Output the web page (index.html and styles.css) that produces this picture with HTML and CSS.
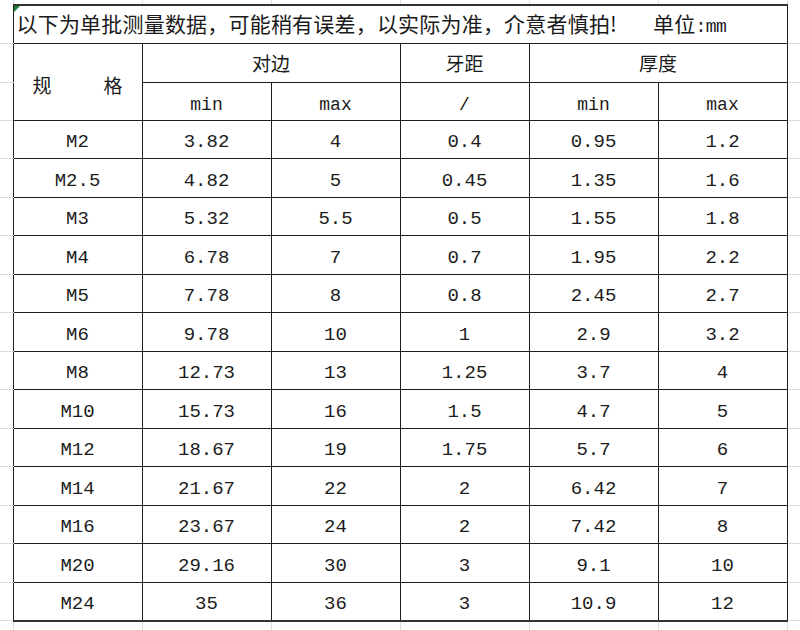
FILE: index.html
```html
<!DOCTYPE html>
<html lang="zh">
<head>
<meta charset="utf-8">
<title>规格表</title>
<link rel="stylesheet" href="styles.css">
</head>
<body>
<table class="sheet">
  <colgroup>
    <col class="c-gutter"><col class="c-col"><col class="c-col"><col class="c-col"><col class="c-col"><col class="c-col"><col class="c-col"><col class="c-gutter">
  </colgroup>
  <tr class="r-top">
    <td class="g g-top"></td><td class="g g-top"></td><td class="g g-top"></td><td class="g g-top"></td><td class="g g-top"></td><td class="g g-top"></td><td class="g g-top"></td><td class="g"></td>
  </tr>
  <tr class="r-title">
    <td class="g g-side"></td>
    <td class="title" colspan="6"><span class="mark"></span>以下为单批测量数据，可能稍有误差，以实际为准，介意者慎拍!<span class="unit">单位<span class="mono">:mm</span></span></td>
    <td class="g g-side"></td>
  </tr>
  <tr class="r-head">
    <td class="g g-side"></td>
    <th class="spec" rowspan="2"><span>规</span><span>格</span></th>
    <th colspan="2">对边</th>
    <th>牙距</th>
    <th colspan="2">厚度</th>
    <td class="g g-side"></td>
  </tr>
  <tr class="r-sub">
    <td class="g g-side"></td>
    <th class="mono">min</th><th class="mono">max</th><th class="mono">/</th><th class="mono">min</th><th class="mono">max</th>
    <td class="g g-side"></td>
  </tr>
  <tr class="r-data"><td class="g g-side"></td><td>M2</td><td>3.82</td><td>4</td><td>0.4</td><td>0.95</td><td>1.2</td><td class="g g-side"></td></tr>
  <tr class="r-data"><td class="g g-side"></td><td>M2.5</td><td>4.82</td><td>5</td><td>0.45</td><td>1.35</td><td>1.6</td><td class="g g-side"></td></tr>
  <tr class="r-data"><td class="g g-side"></td><td>M3</td><td>5.32</td><td>5.5</td><td>0.5</td><td>1.55</td><td>1.8</td><td class="g g-side"></td></tr>
  <tr class="r-data"><td class="g g-side"></td><td>M4</td><td>6.78</td><td>7</td><td>0.7</td><td>1.95</td><td>2.2</td><td class="g g-side"></td></tr>
  <tr class="r-data"><td class="g g-side"></td><td>M5</td><td>7.78</td><td>8</td><td>0.8</td><td>2.45</td><td>2.7</td><td class="g g-side"></td></tr>
  <tr class="r-data"><td class="g g-side"></td><td>M6</td><td>9.78</td><td>10</td><td>1</td><td>2.9</td><td>3.2</td><td class="g g-side"></td></tr>
  <tr class="r-data"><td class="g g-side"></td><td>M8</td><td>12.73</td><td>13</td><td>1.25</td><td>3.7</td><td>4</td><td class="g g-side"></td></tr>
  <tr class="r-data"><td class="g g-side"></td><td>M10</td><td>15.73</td><td>16</td><td>1.5</td><td>4.7</td><td>5</td><td class="g g-side"></td></tr>
  <tr class="r-data"><td class="g g-side"></td><td>M12</td><td>18.67</td><td>19</td><td>1.75</td><td>5.7</td><td>6</td><td class="g g-side"></td></tr>
  <tr class="r-data"><td class="g g-side"></td><td>M14</td><td>21.67</td><td>22</td><td>2</td><td>6.42</td><td>7</td><td class="g g-side"></td></tr>
  <tr class="r-data"><td class="g g-side"></td><td>M16</td><td>23.67</td><td>24</td><td>2</td><td>7.42</td><td>8</td><td class="g g-side"></td></tr>
  <tr class="r-data"><td class="g g-side"></td><td>M20</td><td>29.16</td><td>30</td><td>3</td><td>9.1</td><td>10</td><td class="g g-side"></td></tr>
  <tr class="r-data r-last"><td class="g g-side"></td><td>M24</td><td>35</td><td>36</td><td>3</td><td>10.9</td><td>12</td><td class="g g-side"></td></tr>
  <tr class="r-bottom">
    <td class="g g-top"></td><td class="g g-top"></td><td class="g g-top"></td><td class="g g-top"></td><td class="g g-top"></td><td class="g g-top"></td><td class="g g-top"></td><td class="g"></td>
  </tr>
</table>
</body>
</html>
```

FILE: styles.css
```css
html, body {
  margin: 0;
  padding: 0;
  background: #ffffff;
}

body {
  width: 800px;
  height: 630px;
  overflow: hidden;
  font-family: "Liberation Mono", "Noto Sans CJK SC", monospace;
  color: #1c1c1c;
}

.sheet {
  border-collapse: collapse;
  table-layout: fixed;
  width: 800px;
}

.c-gutter { width: 13px; }
.c-col { width: 129px; }

.sheet td,
.sheet th {
  padding: 0;
  text-align: center;
  vertical-align: middle;
  border: 1px solid #1e1e1e;
  font-weight: normal;
  font-size: 19px;
  line-height: 1;
  white-space: nowrap;
  overflow: hidden;
}

.sheet td.g {
  border: none;
}

.sheet td.g-side {
  border-bottom: 1px solid #dcdcdc;
}

.sheet td.g-top {
  border-right: 1px solid #e0e0e0;
}

.r-top { height: 5px; }
.r-title { height: 38px; }
.r-head { height: 39px; }
.r-sub { height: 38px; }
.r-data { height: 38.5px; }
.r-bottom { height: 12px; }

.r-data td {
  padding-top: 7px;
  font-family: "Liberation Mono", monospace;
}

.sheet .title {
  position: relative;
  text-align: left;
  padding-left: 3px;
  padding-top: 0;
  font-family: "Noto Sans CJK SC", sans-serif;
  font-size: 21px;
  letter-spacing: 0.2px;
  border-top: 2px solid #333333;
  color: #1a1a1a;
}

.mark {
  position: absolute;
  left: 0;
  top: 0;
  width: 0;
  height: 0;
  border-top: 6px solid #1f7a3a;
  border-right: 6px solid transparent;
}

.unit {
  margin-left: 36px;
}

.unit .mono {
  font-family: "Liberation Mono", monospace;
  font-size: 18px;
  letter-spacing: -0.5px;
}

.sheet th {
  font-family: "Noto Sans CJK SC", sans-serif;
  font-size: 19px;
  color: #1a1a1a;
}

.sheet th.mono {
  font-family: "Liberation Mono", monospace;
  font-size: 18px;
  padding-top: 7px;
}

.sheet th.spec {
  padding-top: 6px;
}

.spec span {
  display: inline-block;
}

.spec span + span {
  margin-left: 52px;
}

.r-last td {
  border-bottom: 2px solid #333333;
}
```
